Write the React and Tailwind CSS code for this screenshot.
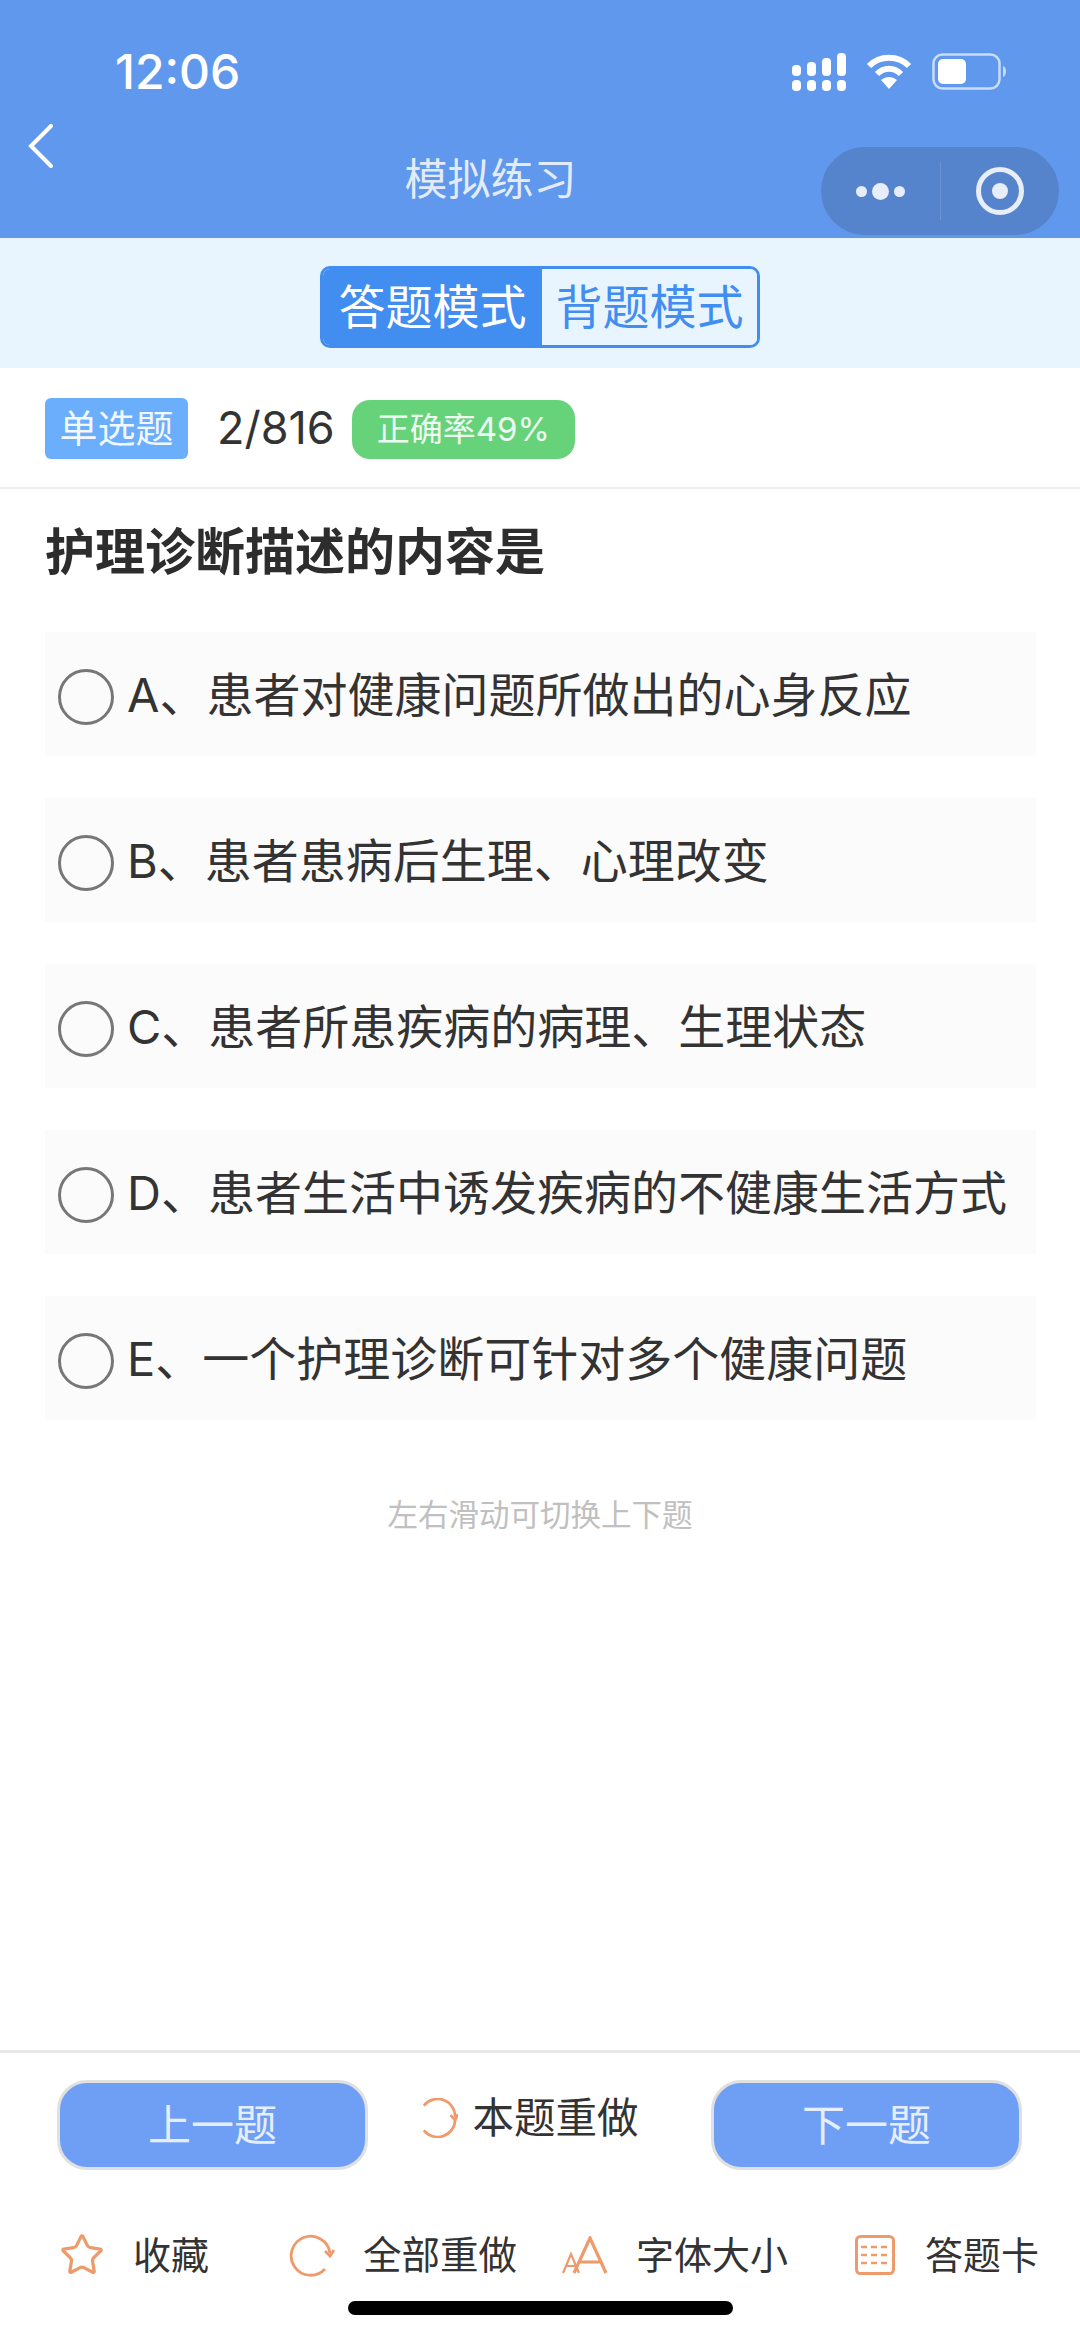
import { Star } from "lucide-react";

const options = [
  "A、患者对健康问题所做出的心身反应",
  "B、患者患病后生理、心理改变",
  "C、患者所患疾病的病理、生理状态",
  "D、患者生活中诱发疾病的不健康生活方式",
  "E、一个护理诊断可针对多个健康问题",
];

function SignalIcon() {
  const tops = [12, 9, 5, 0];
  return (
    <svg width="54" height="38" viewBox="0 0 54 38" fill="#fff">
      {tops.map((top, i) => (
        <g key={i}>
          <rect x={i * 15} y={top} width="9" height={23 - top} rx="4" />
          <rect x={i * 15} y="27" width="9" height="11" rx="4" />
        </g>
      ))}
    </svg>
  );
}

function WifiIcon() {
  return (
    <svg width="46" height="36" viewBox="0 0 46 36" fill="none" stroke="#fff" strokeWidth="6">
      <path d="M3 13 C14 2 32 2 43 13" />
      <path d="M11 21 C18 14 28 14 35 21" />
      <path d="M23 36 L15 27 C20 23 26 23 31 27 Z" fill="#fff" stroke="none" />
    </svg>
  );
}

function BatteryIcon() {
  return (
    <svg width="75" height="37" viewBox="0 0 75 37">
      <rect x="1.5" y="1.5" width="66" height="34" rx="9" fill="none" stroke="#c9dcf8" strokeWidth="2.5" />
      <rect x="6" y="6" width="28" height="25" rx="5" fill="#fff" />
      <path d="M71 13 C75 14 75 23 71 24 Z" fill="#c9dcf8" />
    </svg>
  );
}

function FontSizeIcon() {
  return (
    <svg width="46" height="38" viewBox="0 0 46 38" fill="none" stroke="#ee9a6b" strokeWidth="3.2">
      <path d="M12 37 L28 2 L44 37 M17 26 L39 26" />
      <path d="M1 37 L9 18 L17 37 M4 30 L14 30" strokeWidth="2.2" />
    </svg>
  );
}

function CardIcon() {
  return (
    <svg width="40" height="40" viewBox="0 0 40 40" fill="none" stroke="#ee9a6b">
      <rect x="1.5" y="1.5" width="37" height="37" rx="4" strokeWidth="3" />
      <path d="M6 12 H34 M6 20 H34 M6 28 H34" strokeWidth="2.6" strokeDasharray="6 4" />
    </svg>
  );
}

// small one on the redo-this-question link, ring is open on the left
function RedoSmallIcon() {
  return (
    <svg width="38" height="40" viewBox="0 0 40 40" fill="none" stroke="#ee9a6b" strokeWidth="2.8">
      <path d="M4 7 A18.5 18.5 0 0 1 37 19" />
      <path d="M37 22 A18.5 18.5 0 0 1 4 33" />
      <path d="M32 17 L37 22 L40 16" />
    </svg>
  );
}

function RedoAllIcon() {
  return (
    <svg width="46" height="44" viewBox="0 0 46 44" fill="none" stroke="#ee9a6b" strokeWidth="2.8">
      <path d="M41 20 A19.5 19.5 0 1 0 36 36" />
      <path d="M36 18 L41 23 L45 17" />
    </svg>
  );
}

export default function App() {
  return (
    <div className="relative flex h-[2337px] w-[1080px] flex-col overflow-hidden bg-white font-['Inter','Noto_Sans_CJK_SC',sans-serif] text-[#333]">
      <div className="h-[238px] bg-[#5f98ec]">
        <div className="flex h-[124px] items-start justify-between pl-[115px] pr-[73px] pt-[46px]">
          <span className="text-[48px] leading-[52px] font-medium text-white">12:06</span>
          <div className="flex items-start gap-[20px] pt-[7px]">
            <SignalIcon />
            <WifiIcon />
            <BatteryIcon />
          </div>
        </div>
        <div className="flex h-[114px] items-start pl-[28px] pr-[21px]">
          <svg width="26" height="44" viewBox="0 0 26 44" fill="none" stroke="#fff" strokeWidth="4" strokeLinecap="round">
            <path d="M23 2 L3 22 L23 42" />
          </svg>
          <div className="flex-1 pl-[106px] pt-[27px] text-center text-[43px] leading-[56px] text-[#e3ebf8]">模拟练习</div>
          <div className="mt-[23px] flex h-[88px] w-[238px] items-center rounded-full bg-[#5583cc]">
            <div className="flex h-full w-[119px] items-center justify-center gap-[5px]">
              <span className="size-[11px] rounded-full bg-[#e8eef9]" />
              <span className="size-[17px] rounded-full bg-[#e8eef9]" />
              <span className="size-[11px] rounded-full bg-[#e8eef9]" />
            </div>
            <div className="h-[58px] w-px bg-[#6a94d6]" />
            <div className="flex flex-1 items-center justify-center">
              <div className="flex size-[48px] items-center justify-center rounded-full border-[5px] border-[#e8eef9]">
                <span className="size-[16px] rounded-full bg-[#e8eef9]" />
              </div>
            </div>
          </div>
        </div>
      </div>

      <div className="flex h-[130px] items-start justify-center bg-[#e8f5ff] pt-[28px]">
        <div className="flex h-[82px] w-[440px] overflow-hidden rounded-[10px] border-[3px] border-[#428ef0]">
          <div className="flex w-[219px] items-center justify-center bg-[#428ef0] text-[47px] text-white">答题模式</div>
          <div className="flex flex-1 items-center justify-center bg-[#e8f5ff] text-[47px] text-[#428ef0]">背题模式</div>
        </div>
      </div>

      <div className="flex h-[121px] items-start border-b-2 border-[#f0f0f0] pl-[45px] pt-[30px]">
        <div className="flex h-[61px] w-[143px] items-center justify-center rounded-[6px] bg-[#6aaefc] text-[38px] text-[#f2f8ff]">单选题</div>
        <span className="ml-[29px] text-[45px] leading-[60px] text-[#333]">2/816</span>
        <div className="ml-[17px] mt-[2px] flex h-[59px] w-[223px] items-center justify-center rounded-[18px] bg-[#66d37a] text-[33px] text-[#eefaf0]">正确率49%</div>
      </div>

      <h1 className="px-[45px] pt-[31px] text-[50px] leading-[64px] font-bold text-[#2d2d2d]">护理诊断描述的内容是</h1>

      <div className="mt-[48px] flex flex-col gap-[42px] px-[45px] pr-[44px]">
        {options.map((text) => (
          <div key={text} className="flex h-[124px] items-center gap-[13px] bg-[#fbfbfb] pl-[13px]">
            <span className="mt-[5px] size-[56px] shrink-0 rounded-full border-[3px] border-[#777]" />
            <span className="mt-[2px] text-[47px] whitespace-nowrap text-[#333]">{text}</span>
          </div>
        ))}
      </div>

      <p className="mt-[73px] text-center text-[30.5px] leading-[44px] text-[#c0c0c0]">左右滑动可切换上下题</p>

      <div className="mt-auto h-[287px] border-t-[3px] border-[#e8e8e8]">
        <div className="flex items-start justify-between pl-[57px] pr-[58px] pt-[27px]">
          <button className="h-[90px] w-[311px] rounded-[30px] border-[3px] border-[#e0e0e0] bg-[#6f9ff5] text-[43px] text-[#e6eefc]">上一题</button>
          <div className="mr-[20px] flex items-center gap-[14px] pt-[15px]">
            <RedoSmallIcon />
            <span className="text-[41.5px] leading-[46px] text-[#333]">本题重做</span>
          </div>
          <button className="h-[90px] w-[311px] rounded-[30px] border-[3px] border-[#e0e0e0] bg-[#6f9ff5] text-[43px] text-[#e6eefc]">下一题</button>
        </div>
        <div className="mt-[62px] flex items-center pl-[59px]">
          <Star size={46} strokeWidth={1.7} className="text-[#ee9a6b]" />
          <span className="ml-[28px] text-[38px] leading-[46px]">收藏</span>
          <div className="ml-[80px] flex"><RedoAllIcon /></div>
          <span className="ml-[28px] text-[38.5px] leading-[46px]">全部重做</span>
          <div className="ml-[45px] flex"><FontSizeIcon /></div>
          <span className="ml-[28px] text-[38px] leading-[46px]">字体大小</span>
          <div className="ml-[67px] flex"><CardIcon /></div>
          <span className="ml-[30px] text-[38px] leading-[46px]">答题卡</span>
        </div>
      </div>

      <div className="absolute bottom-[22px] left-[348px] h-[14px] w-[385px] rounded-full bg-black" />
    </div>
  );
}
